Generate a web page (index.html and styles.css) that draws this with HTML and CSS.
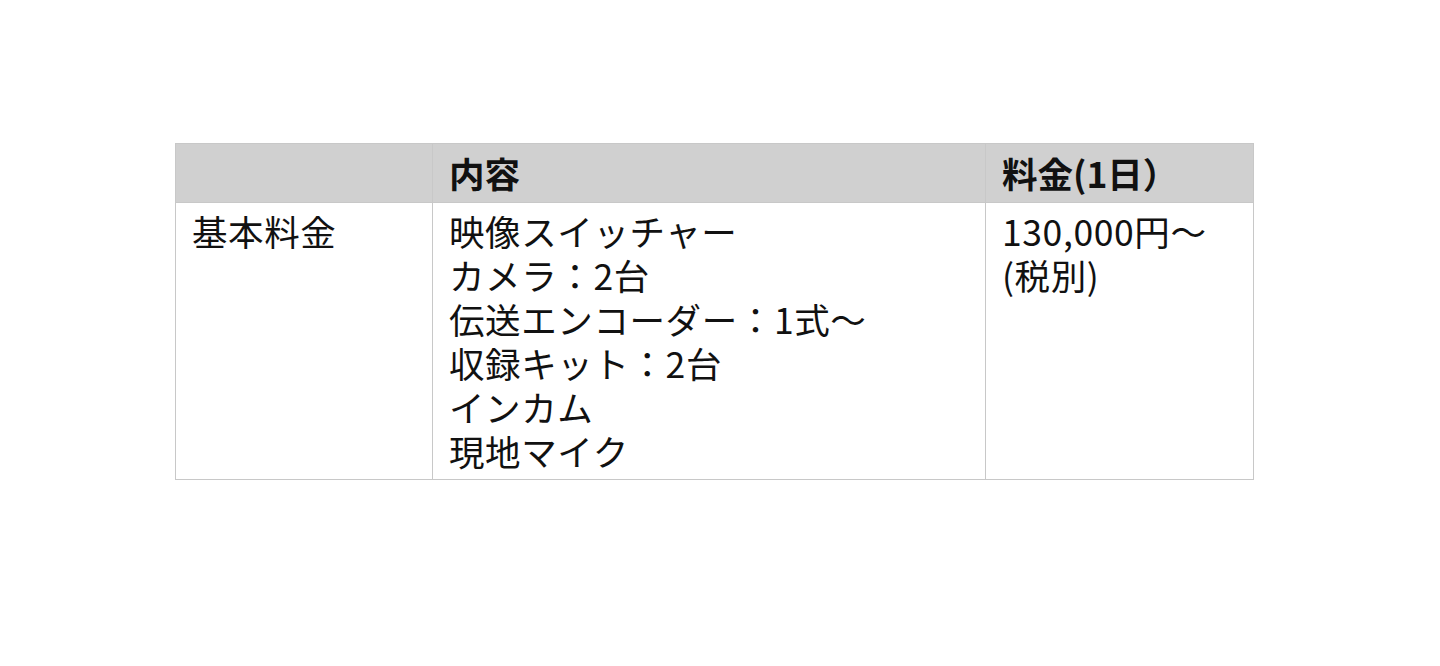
FILE: index.html
```html
<!DOCTYPE html>
<html lang="ja">
<head>
<meta charset="utf-8">
<link rel="stylesheet" href="styles.css">
</head>
<body>
<div class="page">
  <table class="price">
    <colgroup>
      <col class="c1">
      <col class="c2">
      <col class="c3">
    </colgroup>
    <thead>
      <tr><th></th><th>内容</th><th>料金(1日）</th></tr>
    </thead>
    <tbody>
      <tr>
        <td>基本料金</td>
        <td>映像スイッチャー<br>カメラ：2台<br>伝送エンコーダー：1式～<br>収録キット：2台<br>インカム<br>現地マイク</td>
        <td>130,000円～<br>(税別)</td>
      </tr>
    </tbody>
  </table>
</div>
</body>
</html>
```
FILE: styles.css
```css
html, body {
  margin: 0;
  background: #fff;
}
.page {
  padding: 143px 0 0 175px;
}
.price {
  border-collapse: collapse;
  table-layout: fixed;
  width: 1078px;
  font-family: "Noto Sans CJK JP", "Noto Sans", sans-serif;
  font-size: 35.5px;
  line-height: 44px;
  letter-spacing: 0.6px;
  color: #111;
}
.c1 { width: 257px; }
.c2 { width: 553px; }
.c3 { width: 268px; }
.price th, .price td {
  border: 1px solid #c8c8c8;
  text-align: left;
  vertical-align: top;
  padding: 6px 16px 6px 16px;
}
.price th {
  background: #d0d0d0;
  font-weight: 700;
  letter-spacing: 0;
  padding-top: 7px;
  padding-bottom: 7px;
}
.price td {
  font-weight: 400;
}
```
